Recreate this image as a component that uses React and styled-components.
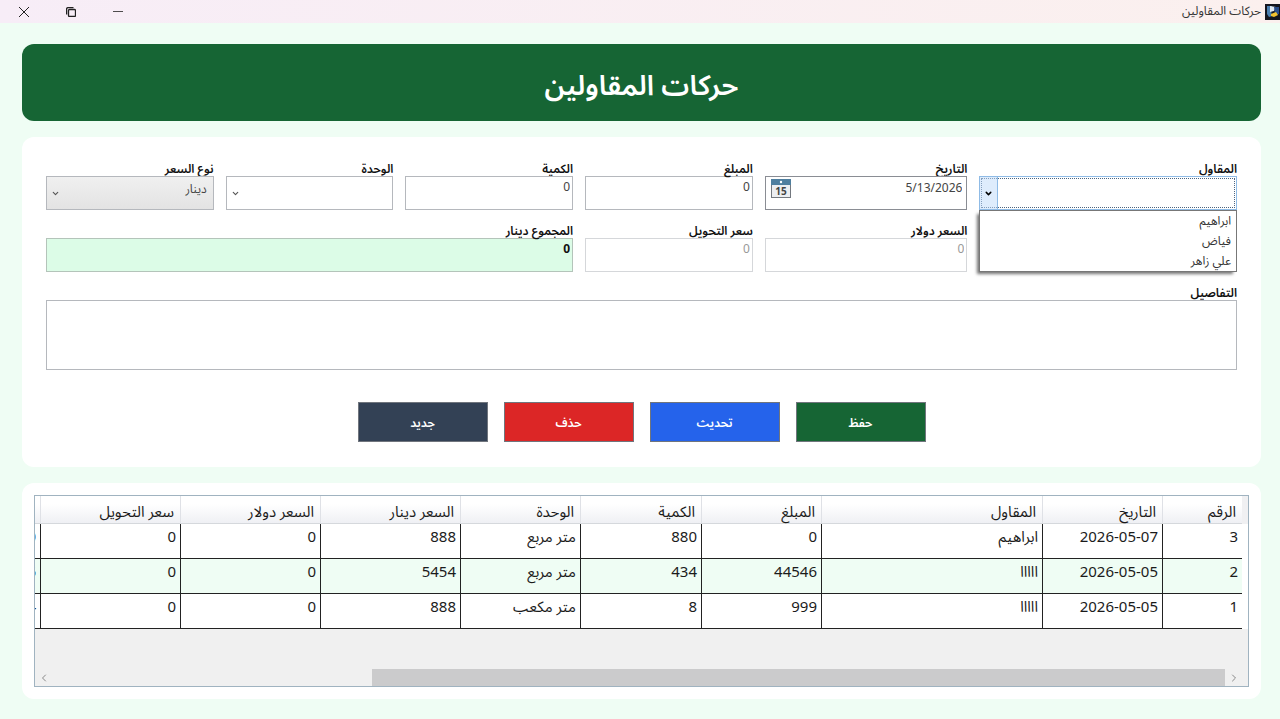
import { ChevronDown, ChevronLeft, ChevronRight } from 'lucide-react'
import styled, { createGlobalStyle } from 'styled-components'

const GlobalStyle = createGlobalStyle`
  * {
    box-sizing: border-box;
  }

  body {
    margin: 0;
    background: #effdf4;
    color: #1b1b1b;
    font-family: 'Noto Sans', 'Noto Sans Arabic', 'DejaVu Sans', sans-serif;
    font-size: 12px;
  }

  button, input, select, textarea {
    font: inherit;
  }
`

const TitleBar = styled.header`
  display: flex;
  align-items: center;
  justify-content: space-between;
  height: 23px;
  background: linear-gradient(to left, #fbf0ee, #f7edf7);
`

const AppName = styled.div`
  display: flex;
  align-items: center;
  gap: 4px;
  color: #333;
`

const WindowButtons = styled.div`
  display: flex;
`

const WindowButton = styled.button`
  display: flex;
  align-items: center;
  justify-content: center;
  width: 47px;
  height: 23px;
  padding: 0;
  border: none;
  background: transparent;
  color: #222;
`

const Page = styled.main`
  display: flex;
  flex-direction: column;
  gap: 16px;
  padding: 21px 19px 20px 22px;
`

const Banner = styled.h1`
  display: flex;
  align-items: center;
  justify-content: center;
  height: 77px;
  margin: 0;
  padding-top: 8px;
  border-radius: 12px;
  background: #166534;
  color: #fff;
  font-size: 28px;
  font-weight: 600;
`

const Card = styled.section`
  padding: ${({ $padding }) => $padding};
  border-radius: 12px;
  background: #fff;
`

const FormGrid = styled.div`
  display: grid;
  grid-template-columns: 258fr 203fr 168fr 168fr 168fr 168fr;
  gap: 14px 12px;
`

const Field = styled.div`
  position: relative;
  grid-column: ${({ $column }) => $column || 'auto'};
  min-width: 0;
`

const Label = styled.label`
  display: block;
  height: 14px;
  color: #111;
  font-weight: 600;
  line-height: 14px;
  white-space: nowrap;
`

const Control = styled.div`
  position: relative;
  display: flex;
`

const TextInput = styled.input`
  display: block;
  width: 100%;
  height: 34px;
  padding: 0 2px 14px;
  border: 1px solid ${({ $total }) => ($total ? '#b4c4ba' : '#b5b8bd')};
  border-radius: 0;
  background: ${({ $total }) => ($total ? '#dcfce7' : '#fff')};
  color: ${({ $total }) => ($total ? '#111' : '#444')};
  font-weight: ${({ $total }) => ($total ? 700 : 400)};
  text-align: right;

  &:disabled {
    border-color: #d5d7da;
    color: #999;
  }
`

const DateInput = styled(TextInput)`
  padding: 0 4px 12px;
  border-color: #8a8d94;
`

const CalendarButton = styled.button`
  position: absolute;
  top: 3px;
  left: 6px;
  width: 20px;
  height: 19px;
  padding: 0;
  border: none;
  background: transparent;
`

const Select = styled.select`
  appearance: none;
  width: 100%;
  height: 34px;
  padding: 0 6px 10px 20px;
  border: 1px solid #b5b8bd;
  border-radius: 0;
  background: ${({ $filled }) => ($filled ? 'linear-gradient(#f0f0f0, #e3e3e3)' : '#fff')};
  color: #444;
`

const OpenSelect = styled(Select)`
  border-color: #8fbbe6;
  outline: 1px dotted #4d6580;
  outline-offset: -3px;
`

const Arrow = styled.span`
  position: absolute;
  top: 1px;
  bottom: 1px;
  left: 1px;
  display: flex;
  align-items: center;
  justify-content: center;
  width: 18px;
  border-right: 1px solid ${({ $active }) => ($active ? '#8fbbe6' : 'transparent')};
  background: ${({ $active }) => ($active ? 'rgba(190, 218, 250, 0.5)' : 'transparent')};
  color: ${({ $active }) => ($active ? '#000' : '#555')};
  pointer-events: none;
`

const Options = styled.ul`
  position: absolute;
  top: 48px;
  right: 0;
  left: 0;
  z-index: 1;
  margin: 0;
  padding: 0 5px;
  border: 1px solid #777;
  background: #fff;
  box-shadow: -3px 3px 3px -1px rgba(0, 0, 0, 0.55);
  color: #333;
  line-height: 20px;
  list-style: none;
`

const Details = styled.textarea`
  display: block;
  width: 100%;
  height: 70px;
  border: 1px solid #b5b8bd;
  border-radius: 0;
  resize: none;
`

const Actions = styled.div`
  display: flex;
  justify-content: center;
  gap: 16px;
  margin-top: 32px;
`

const ActionButton = styled.button`
  width: 130px;
  height: 40px;
  padding: 2px 0 0;
  border: 1px solid #70757d;
  background: ${({ $color }) => $color};
  color: #fff;
  font-weight: 600;
`

const DataGrid = styled.div`
  overflow: hidden;
  border: 1px solid #a0b3c0;
  background: #f0f0f0;
`

const GridBody = styled.div`
  height: 173px;
  overflow: hidden;
  padding-right: 6px;
  background: linear-gradient(#f0f0f2 0 28px, #fff 28px 133px, #f0f0f0 133px);
`

const Table = styled.table`
  width: 1340px;
  border-spacing: 0;
  table-layout: fixed;
  font-size: 15px;
  line-height: 20px;
`

const HeadCell = styled.th`
  width: ${({ $width }) => $width}px;
  height: 28px;
  padding: 2px 6px 0;
  border-left: 1px solid #dfe1e6;
  border-bottom: 1px solid #d5d8dc;
  background: linear-gradient(#fff 30%, #eff0f4);
  font-weight: 400;
  text-align: right;
  white-space: nowrap;
`

const Row = styled.tr`
  background: #fff;

  &:nth-child(even) {
    background: #effdf4;
  }
`

const Cell = styled.td`
  height: 35px;
  padding: 2px 4px 0;
  border-left: 1px solid #222;
  border-bottom: 1px solid #222;
  text-align: right;
  vertical-align: top;
  white-space: nowrap;
`

const ScrollBar = styled.div`
  display: flex;
  direction: ltr;
  height: 17px;
  padding-right: 6px;
`

const ScrollButton = styled.button`
  display: flex;
  align-items: center;
  justify-content: center;
  width: 17px;
  padding: 0;
  border: none;
  background: transparent;
  color: #888;
`

const ScrollTrack = styled.div`
  display: flex;
  flex: 1;
  justify-content: flex-end;
`

const ScrollThumb = styled.div`
  width: calc(100% * 8 / 11);
  background: #cbcbcc;
`

const columns = [
  { title: 'الرقم', width: 80 },
  { title: 'التاريخ', width: 120 },
  { title: 'المقاول', width: 221 },
  { title: 'المبلغ', width: 120 },
  { title: 'الكمية', width: 121 },
  { title: 'الوحدة', width: 120 },
  { title: 'السعر دينار', width: 140 },
  { title: 'السعر دولار', width: 140 },
  { title: 'سعر التحويل', width: 140 },
  { title: 'المجموع', width: 138 },
]

const rows = [
  ['3', '2026-05-07', 'ابراهيم', '0', '880', 'متر مربع', '888', '0', '0', '781440'],
  ['2', '2026-05-05', 'ااااا', '44546', '434', 'متر مربع', '5454', '0', '0', '2367036'],
  ['1', '2026-05-05', 'ااااا', '999', '8', 'متر مكعب', '888', '0', '0', '7104'],
]

const actions = [
  { label: 'حفظ', color: '#166534' },
  { label: 'تحديث', color: '#2563eb' },
  { label: 'حذف', color: '#dc2626' },
  { label: 'جديد', color: '#334155' },
]

const AppIcon = () => (
  <svg width="15" height="16" viewBox="0 0 15 16" aria-hidden="true">
    <rect width="15" height="16" fill="#14161f" />
    <path d="M2 2h5l-1 4 1 6-3 1-2-3z" fill="#4a7fb0" />
    <path d="M5 2l6 1-2 4-4 1z" fill="#dfe9f2" />
    <path d="M9 3h5v7l-4 1z" fill="#2b4f8c" />
    <path d="M6 10l5-2 2 3-4 2-3-1z" fill="#f2c230" />
  </svg>
)

const CalendarIcon = () => (
  <svg width="20" height="19" viewBox="0 0 20 19" aria-hidden="true">
    <rect x="0.5" y="0.5" width="19" height="18" fill="#eceef1" stroke="#73787f" />
    <rect width="20" height="6" fill="#4f7f9f" />
    <circle cx="10" cy="3" r="1.2" fill="#fff" />
    <text x="10" y="16" textAnchor="middle" fontSize="10" fontWeight="700" fill="#444">
      15
    </text>
  </svg>
)

export const ContractorMovements = () => (
  <>
    <GlobalStyle />
    <TitleBar dir="rtl">
      <AppName>
        <AppIcon />
        حركات المقاولين
      </AppName>
      <WindowButtons>
        <WindowButton aria-label="تصغير">
          <svg width="10" height="10" viewBox="0 0 10 10" stroke="currentColor">
            <path d="M0 4.5h10" strokeWidth="0.8" />
          </svg>
        </WindowButton>
        <WindowButton aria-label="استعادة">
          <svg width="10" height="10" viewBox="0 0 10 10" fill="none" stroke="currentColor" strokeWidth="1.3">
            <rect x="2.5" y="2.5" width="7" height="7" rx="1" />
            <path d="M0.6 7.5V2.2Q0.6 0.6 2.2 0.6H7.5" />
          </svg>
        </WindowButton>
        <WindowButton aria-label="إغلاق">
          <svg width="10" height="10" viewBox="0 0 10 10" stroke="currentColor">
            <path d="M0 0L10 10M10 0L0 10" />
          </svg>
        </WindowButton>
      </WindowButtons>
    </TitleBar>

    <Page dir="rtl">
      <Banner>حركات المقاولين</Banner>

      <Card $padding="25px 24px">
        <FormGrid>
          <Field>
            <Label htmlFor="contractor">المقاول</Label>
            <Control>
              <OpenSelect id="contractor" defaultValue="">
                <option value="" />
              </OpenSelect>
              <Arrow $active>
                <ChevronDown size={9} strokeWidth={4} />
              </Arrow>
            </Control>
            <Options>
              <li>ابراهيم</li>
              <li>فياض</li>
              <li>علي زاهر</li>
            </Options>
          </Field>
          <Field>
            <Label htmlFor="date">التاريخ</Label>
            <Control>
              <DateInput id="date" dir="ltr" defaultValue="5/13/2026" />
              <CalendarButton aria-label="اختيار التاريخ">
                <CalendarIcon />
              </CalendarButton>
            </Control>
          </Field>
          <Field>
            <Label htmlFor="amount">المبلغ</Label>
            <TextInput id="amount" defaultValue="0" />
          </Field>
          <Field>
            <Label htmlFor="quantity">الكمية</Label>
            <TextInput id="quantity" defaultValue="0" />
          </Field>
          <Field>
            <Label htmlFor="unit">الوحدة</Label>
            <Control>
              <Select id="unit" defaultValue="">
                <option value="" />
                <option>متر مربع</option>
                <option>متر مكعب</option>
              </Select>
              <Arrow>
                <ChevronDown size={9} strokeWidth={3} />
              </Arrow>
            </Control>
          </Field>
          <Field>
            <Label htmlFor="priceType">نوع السعر</Label>
            <Control>
              <Select id="priceType" $filled>
                <option>دينار</option>
                <option>دولار</option>
              </Select>
              <Arrow>
                <ChevronDown size={9} strokeWidth={3} />
              </Arrow>
            </Control>
          </Field>
          <Field $column="2">
            <Label htmlFor="priceUsd">السعر دولار</Label>
            <TextInput id="priceUsd" defaultValue="0" disabled />
          </Field>
          <Field>
            <Label htmlFor="rate">سعر التحويل</Label>
            <TextInput id="rate" defaultValue="0" disabled />
          </Field>
          <Field $column="4 / 7">
            <Label htmlFor="total">المجموع دينار</Label>
            <TextInput id="total" defaultValue="0" readOnly $total />
          </Field>
          <Field $column="1 / 7">
            <Label htmlFor="details">التفاصيل</Label>
            <Details id="details" />
          </Field>
        </FormGrid>

        <Actions>
          {actions.map((action) => (
            <ActionButton key={action.label} $color={action.color}>
              {action.label}
            </ActionButton>
          ))}
        </Actions>
      </Card>

      <Card $padding="12px">
        <DataGrid>
          <GridBody>
            <Table>
              <thead>
                <tr>
                  {columns.map((column) => (
                    <HeadCell key={column.title} $width={column.width}>
                      {column.title}
                    </HeadCell>
                  ))}
                </tr>
              </thead>
              <tbody>
                {rows.map((row) => (
                  <Row key={row[0]}>
                    {row.map((value, index) => (
                      <Cell key={columns[index].title}>{value}</Cell>
                    ))}
                  </Row>
                ))}
              </tbody>
            </Table>
          </GridBody>
          <ScrollBar>
            <ScrollButton aria-label="يسار">
              <ChevronLeft size={12} />
            </ScrollButton>
            <ScrollTrack>
              <ScrollThumb />
            </ScrollTrack>
            <ScrollButton aria-label="يمين">
              <ChevronRight size={12} />
            </ScrollButton>
          </ScrollBar>
        </DataGrid>
      </Card>
    </Page>
  </>
)

export default ContractorMovements
